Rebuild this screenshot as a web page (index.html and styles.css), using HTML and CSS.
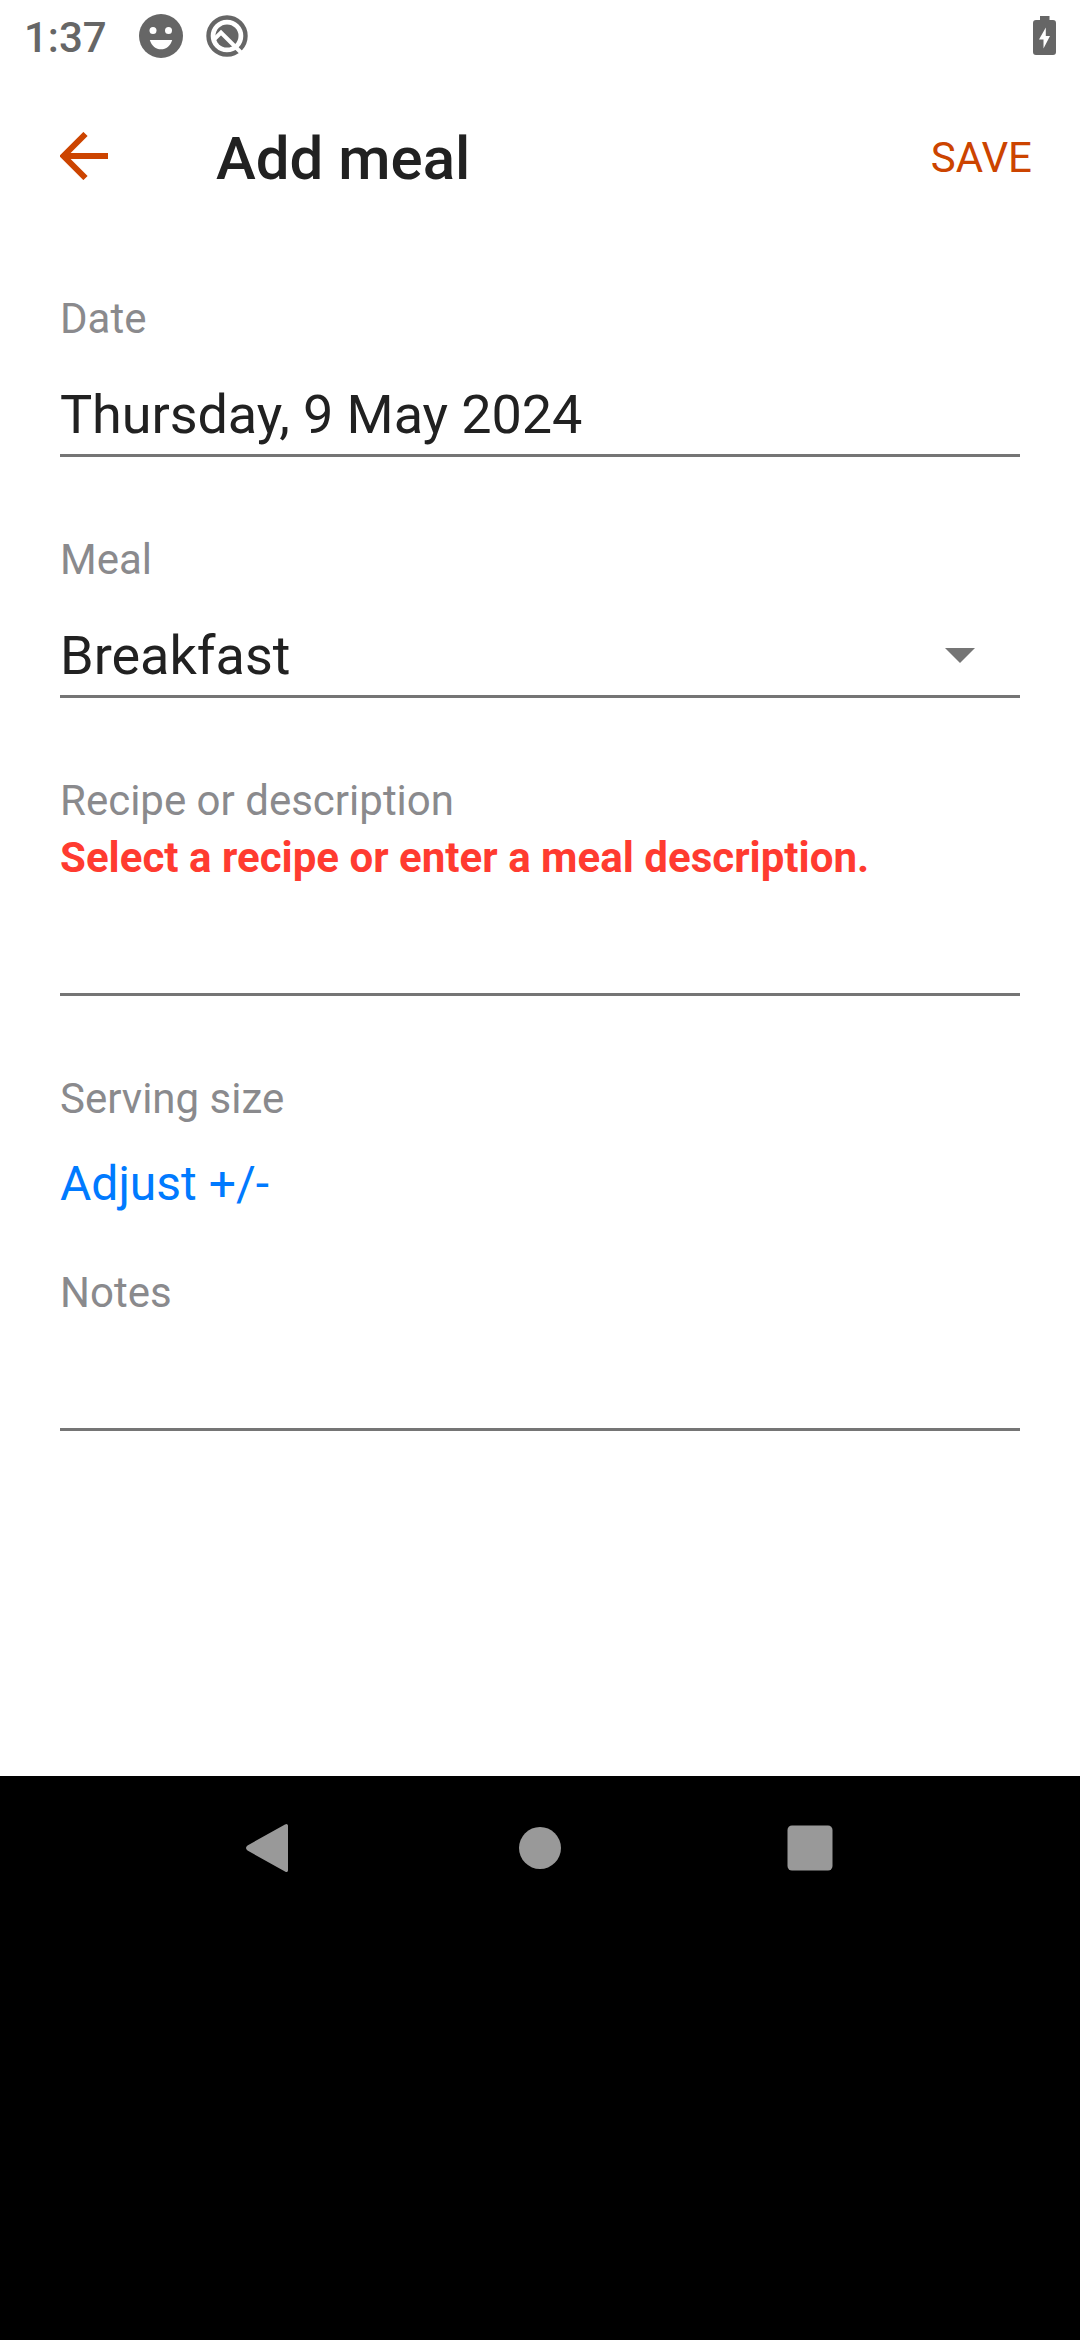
FILE: index.html
```html
<!DOCTYPE html>
<html lang="en">
<head>
<meta charset="utf-8">
<title>Add meal</title>
<link rel="stylesheet" href="styles.css">
</head>
<body>
<div class="screen">
  <div class="status-bar">
    <span class="clock">1:37</span>
    <svg class="status-face" width="44" height="44" viewBox="0 0 44 44">
      <circle cx="22" cy="22" r="22" fill="#666"/>
      <circle cx="14" cy="16.5" r="3.5" fill="#fff"/>
      <circle cx="29.5" cy="16.5" r="3.5" fill="#fff"/>
      <path d="M10.8 26H33.2C31.5 32 27 35.300 22 35.300S12.500 32 10.800 26Z" fill="#fff"/>
    </svg>
    <svg class="status-q" width="42" height="42" viewBox="0 0 42 42">
      <circle cx="21" cy="21" r="18.500" fill="none" stroke="#666" stroke-width="4.400"/>
      <circle cx="21" cy="21" r="11.500" fill="#666"/>
      <path d="M7.500 25L15 17.500L37 39.500" fill="none" stroke="#fff" stroke-width="4"/>
    </svg>
    <svg class="status-battery" width="23" height="39" viewBox="0 0 23 39">
      <path d="M7 0H16.500V4H20Q23 4 23 7V36Q23 39 20 39H3Q0 39 0 36V7Q0 4 3 4H7Z" fill="#666"/>
      <path d="M12.800 11.500V20H17L10.500 32.500V23.500H6Z" fill="#fff"/>
    </svg>
  </div>

  <header class="app-bar">
    <svg class="back" width="48" height="48" viewBox="0 0 48 48">
      <path d="M48 24H4M25.500 2L3.500 24L25.500 46" fill="none" stroke="#cc4400" stroke-width="6"/>
    </svg>
    <h1 class="title">Add meal</h1>
    <span class="save">SAVE</span>
  </header>

  <main class="form">
    <section class="field">
      <div class="label">Date</div>
      <div class="control date">Thursday, 9 May 2024</div>
    </section>
    <section class="field">
      <div class="label">Meal</div>
      <div class="control select">Breakfast
        <svg class="caret" width="30" height="15" viewBox="0 0 30 15"><path d="M0 0H30L15 15Z" fill="#757575"/></svg>
      </div>
    </section>
    <section class="field">
      <div class="label">Recipe or description</div>
      <div class="error">Select a recipe or enter a meal description.</div>
      <div class="control"></div>
    </section>
    <section class="field serving">
      <div class="label">Serving size</div>
      <a class="adjust">Adjust +/-</a>
    </section>
    <section class="field">
      <div class="label">Notes</div>
      <div class="control"></div>
    </section>
  </main>

  <nav class="nav-bar">
    <svg width="270" height="144" viewBox="0 0 270 144"><path d="M153 49.500V94.500Q152.500 97 150 95.500L112.500 74.500Q109.500 72 112.500 69.500L150 48.500Q152.500 47 153 49.500Z" fill="#999"/></svg>
    <svg width="270" height="144" viewBox="0 0 270 144"><circle cx="135" cy="72" r="21" fill="#999"/></svg>
    <svg width="270" height="144" viewBox="0 0 270 144"><rect x="112.500" y="49.500" width="45" height="45" rx="4.500" fill="#999"/></svg>
  </nav>
</div>
</body>
</html>
```

FILE: styles.css
```css
* {
  box-sizing: border-box;
}

body {
  margin: 0;
  background: #000;
  font-family: Roboto, "Liberation Sans", sans-serif;
  color: #212121;
}

svg {
  display: block;
  flex: none;
}

.screen {
  display: flex;
  flex-direction: column;
  width: 1080px;
  height: 2340px;
}

.status-bar {
  display: flex;
  align-items: flex-start;
  height: 72px;
  padding: 13px 24px 0 24px;
  background: #fff;
}

.clock {
  width: 115px;
  font-size: 42px;
  line-height: 49px;
  font-weight: 500;
  color: #666;
}

.status-face {
  margin-top: 1px;
}

.status-q {
  margin: 2px 0 0 23px;
}

.status-battery {
  margin: 3px 0 0 auto;
}

.app-bar {
  display: flex;
  align-items: center;
  height: 168px;
  padding: 0 48px 0 60px;
  background: #fff;
}

.title {
  margin: 5px 0 0 108px;
  font-size: 60px;
  line-height: 71px;
  font-weight: 500;
}

.save {
  margin: 3px 0 0 auto;
  font-size: 42px;
  line-height: 49px;
  color: #cc4400;
}

.form {
  display: flex;
  flex: none;
  flex-direction: column;
  gap: 78px;
  height: 1536px;
  padding: 54px 60px 0;
  background: #fff;
}

.label {
  font-size: 42px;
  line-height: 49px;
  color: #8a8a8d;
}

.control {
  height: 74px;
  margin-top: 40px;
  border-bottom: 3px solid #757575;
  font-size: 54px;
  line-height: 63px;
}

.date {
  letter-spacing: -0.1px;
}

.select {
  display: flex;
  justify-content: space-between;
}

.caret {
  margin: 24px 45px 0 0;
}

.error {
  margin-top: 8px;
  font-size: 42px;
  line-height: 49px;
  font-weight: 700;
  letter-spacing: 0.02px;
  color: #ff3b30;
}

.serving {
  margin-bottom: -22px;
}

.adjust {
  display: block;
  margin-top: 32px;
  font-size: 48px;
  line-height: 57px;
  color: #007aff;
}

.nav-bar {
  display: flex;
  justify-content: center;
  height: 144px;
}
```
